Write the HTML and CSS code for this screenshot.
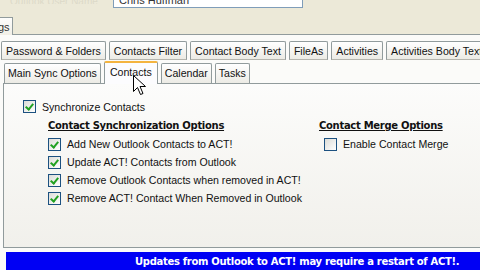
FILE: index.html
```html
<!DOCTYPE html>
<html>
<head>
<meta charset="utf-8">
<link rel="stylesheet" href="styles.css">
</head>
<body>
<div class="screen">
  <div class="top">
    <div class="faint">Outlook User Name</div>
    <div class="field">Chris Huffman</div>
  </div>
  <div class="outer-tabs">
    <div class="otab">gs</div>
  </div>
  <div class="outer-panel">
    <div class="row1">
      <div class="tab">Password &amp; Folders</div>
      <div class="tab">Contacts Filter</div>
      <div class="tab">Contact Body Text</div>
      <div class="tab">FileAs</div>
      <div class="tab">Activities</div>
      <div class="tab">Activities Body Text</div>
    </div>
    <div class="row2">
      <div class="tab t2">Main Sync Options</div>
      <div class="tab t2 sel">Contacts</div>
      <div class="tab t2">Calendar</div>
      <div class="tab t2">Tasks</div>
    </div>
    <div class="panel">
      <label class="chk main"><span class="box on"></span>Synchronize Contacts</label>
      <div class="cols">
        <div class="col left">
          <div class="title">Contact Synchronization Options</div>
          <label class="chk"><span class="box on"></span>Add New Outlook Contacts to ACT!</label>
          <label class="chk"><span class="box on"></span>Update ACT! Contacts from Outlook</label>
          <label class="chk"><span class="box on"></span>Remove Outlook Contacts when removed in ACT!</label>
          <label class="chk"><span class="box on"></span>Remove ACT! Contact When Removed in Outlook</label>
        </div>
        <div class="col right">
          <div class="title">Contact Merge Options</div>
          <label class="chk"><span class="box"></span>Enable Contact Merge</label>
        </div>
      </div>
    </div>
    <div class="notice">Updates from Outlook to ACT! may require a restart of ACT!.</div>
  </div>
  <svg class="cursor" width="13" height="21" viewBox="0 0 13 21"><path d="M0.5 0.5 L0.5 16.5 L4.5 12.5 L7.5 19.5 L10 18.5 L7 11.5 L12.5 11.5 Z" fill="#fff" stroke="#000" stroke-width="1"/></svg>
</div>
</body>
</html>
```
FILE: styles.css
```css
* { box-sizing: border-box; }
html, body { margin: 0; padding: 0; }
body {
  width: 480px; height: 270px; overflow: hidden;
  font-family: "Liberation Sans", Arial, sans-serif;
  font-size: 10.6px; color: #111;
  background: #ECE9D8;
}
.screen { position: relative; width: 480px; height: 270px; overflow: hidden; }
.top {
  height: 17px; display: flex; align-items: flex-start;
}
.faint {
  width: 113px; color: #dcd9c8; font-size: 10px; line-height: 4px; padding-left: 10px;
  overflow: hidden; height: 4px;
}
.field {
  width: 190px; height: 8px; margin-top: 0;
  background: #fff; border: 1px solid #7f9db9; border-top: none;
  font-size: 11px; line-height: 0; padding-left: 5px; color: #333;
  overflow: hidden;
}
.outer-tabs { height: 18px; display: flex; border-bottom: 1px solid #919b9c; }
.otab {
  width: 13px; height: 18px; border: 1px solid #919b9c; border-left: none; border-bottom: none;
  background: linear-gradient(#fdfdfc, #f1efe6); font-size: 11px; line-height: 18px;
  overflow: hidden; text-indent: -2px; color: #333;
}
.outer-panel {
  height: 235px; background: #fbfbf9; padding-top: 6px;
}
.row1, .row2 { display: flex; gap: 3px; white-space: nowrap; }
.row1 { padding-left: 1px; height: 19px; }
.row2 { padding-left: 4px; height: 23px; margin-top: 0; align-items: flex-end; }
.tab {
  height: 19px; padding: 0 4px; line-height: 19px;
  border: 1px solid #919b9c; border-bottom: none; border-radius: 2px 2px 0 0;
  background: linear-gradient(#ffffff, #ecebe5);
  flex: none;
}
.row1 .tab { border-bottom: 1px solid #b5b5ae; }
.t2 { height: 20px; line-height: 19px; padding: 0 3px; }
.sel {
  height: 23px; background: #fcfcfe; border-top: 2px solid #f4b43f;
  border-color: #f4b43f #919b9c #919b9c #919b9c;
  position: relative; z-index: 1; margin-bottom: -1px; padding: 0 5px;
}
.panel {
  margin-left: 3px; height: 165px;
  border: 1px solid #919b9c; border-right: none;
  background: linear-gradient(#fcfcfb, #f1f0eb);
  padding: 16px 0 0 19px;
}
.chk { display: flex; align-items: center; height: 18px; white-space: nowrap; }
.box {
  width: 13px; height: 13px; border: 1px solid #1c5180; margin-right: 6px; flex: none;
  background: linear-gradient(135deg, #dcdcd7, #ffffff);
  position: relative;
}
.box.on::after {
  content: ""; position: absolute; left: 3px; top: 1px; width: 3px; height: 6px;
  border: solid #21a121; border-width: 0 2px 2px 0; transform: rotate(40deg);
}
.main { height: 13px; }
.cols { display: grid; grid-template-columns: 271px auto; padding-left: 25px; margin-top: 4px; }
.title {
  font-family: "DejaVu Sans", Verdana, sans-serif; font-weight: bold; font-size: 10px;
  text-decoration: underline; height: 18px; line-height: 18px; letter-spacing: -0.3px;
}
.right .chk { padding-left: 5px; }
.notice {
  margin: 4px 0 0 6px; height: 18px; background: #0000f4; color: #fff;
  font-family: "DejaVu Sans", Verdana, sans-serif; font-weight: bold; font-size: 10px;
  line-height: 19px; padding-left: 129px; white-space: nowrap; overflow: hidden;
  letter-spacing: -0.3px;
}
.cursor { position: absolute; left: 133px; top: 75px; z-index: 5; }
```
